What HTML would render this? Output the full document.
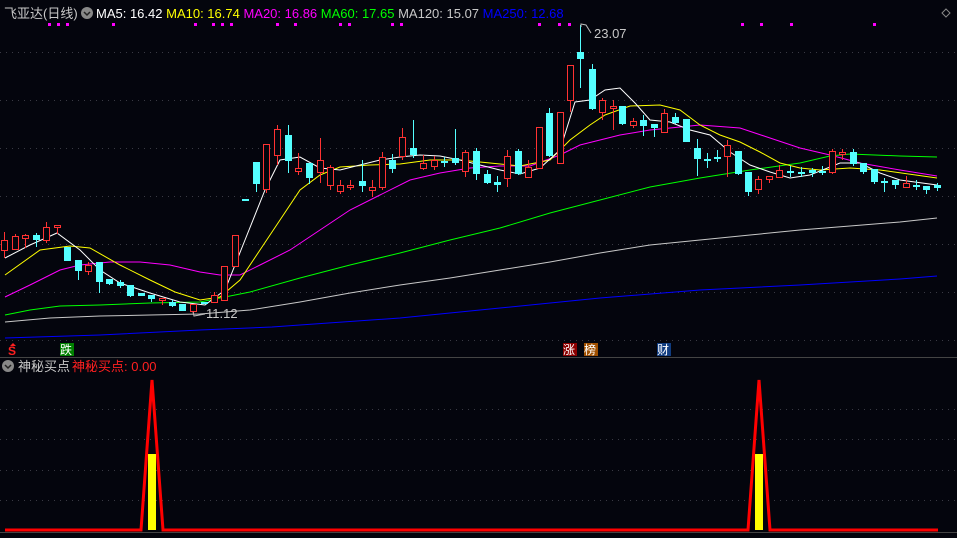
<!DOCTYPE html>
<html><head><meta charset="utf-8"><style>
html,body{margin:0;padding:0;background:#04050d;}
body{width:957px;height:538px;overflow:hidden;position:relative;font-family:"Liberation Sans","Noto Sans CJK SC",sans-serif;}
svg{position:absolute;left:0;top:0;}
</style></head><body>
<svg width="957" height="538" viewBox="0 0 957 538" xmlns="http://www.w3.org/2000/svg">
<rect width="957" height="538" fill="#04050d"/>
<g stroke="#3a3a44" stroke-width="1" stroke-dasharray="1,5">
<line x1="0" y1="52.5" x2="957" y2="52.5"/><line x1="0" y1="100.5" x2="957" y2="100.5"/>
<line x1="0" y1="148.5" x2="957" y2="148.5"/><line x1="0" y1="196.5" x2="957" y2="196.5"/>
<line x1="0" y1="244.5" x2="957" y2="244.5"/><line x1="0" y1="292.5" x2="957" y2="292.5"/>
<line x1="0" y1="340.5" x2="957" y2="340.5"/>
<line x1="0" y1="409.5" x2="957" y2="409.5"/><line x1="0" y1="439.5" x2="957" y2="439.5"/>
<line x1="0" y1="470.5" x2="957" y2="470.5"/><line x1="0" y1="500.5" x2="957" y2="500.5"/>
</g>
<line x1="0" y1="357.5" x2="957" y2="357.5" stroke="#444" />
<line x1="0" y1="532.5" x2="957" y2="532.5" stroke="#444" />
<!-- header -->
<text x="4" y="18" font-size="13" fill="#c8c8c8">飞亚达(日线)</text>
<circle cx="87" cy="13" r="6" fill="#888"/><path d="M84 12 L87 15 L90 12" stroke="#222" stroke-width="1.5" fill="none"/>
<text x="96" y="18" font-size="13"><tspan fill="#ffffff">MA5: 16.42 </tspan><tspan fill="#ffff00">MA10: 16.74 </tspan><tspan fill="#ff00ff">MA20: 16.86 </tspan><tspan fill="#00ff00">MA60: 17.65 </tspan><tspan fill="#c8c8c8">MA120: 15.07 </tspan><tspan fill="#0000ff">MA250: 12.68</tspan></text>
<path d="M946 9 L950 13 L946 17 L942 13Z" stroke="#888" fill="none"/>
<g fill="#ff00ff">
<rect x="48" y="23" width="3" height="3"/><rect x="57" y="23" width="3" height="3"/><rect x="66" y="23" width="3" height="3"/><rect x="112" y="23" width="3" height="3"/><rect x="194" y="23" width="3" height="3"/><rect x="212" y="23" width="3" height="3"/><rect x="221" y="23" width="3" height="3"/><rect x="230" y="23" width="3" height="3"/><rect x="276" y="23" width="3" height="3"/><rect x="294" y="23" width="3" height="3"/><rect x="339" y="23" width="3" height="3"/><rect x="348" y="23" width="3" height="3"/><rect x="391" y="23" width="3" height="3"/><rect x="400" y="23" width="3" height="3"/><rect x="538" y="23" width="3" height="3"/><rect x="558" y="23" width="3" height="3"/><rect x="568" y="23" width="3" height="3"/><rect x="741" y="23" width="3" height="3"/><rect x="760" y="23" width="3" height="3"/><rect x="790" y="23" width="3" height="3"/><rect x="873" y="23" width="3" height="3"/>
</g>
<!-- MAs -->
<g fill="none" stroke-width="1">
<polyline stroke="#c8c8c8" points="5,322 50,318 100,316 150,315 200,314 250,310 300,302 350,293 400,285 450,278 500,270 550,262 600,253 650,245 700,240 750,235 800,230 850,226 900,222 937,218"/>
<polyline stroke="#0000ff" points="5,338 100,335 200,330 272,327 300,325 400,318 500,308 600,298 700,290 800,285 900,279 937,276"/>
<polyline stroke="#00ff00" points="5,315 30,310 60,306 100,305 150,303 200,302 250,292 300,278 350,265 400,253 450,240 500,228 550,213 600,200 650,187 700,178 750,170 800,163 830,156 850,154 900,156 937,157"/>
<polyline stroke="#ff00ff" points="5,297 30,285 60,270 80,265 110,262 140,262 170,265 200,272 220,275 240,275 260,265 290,250 320,230 350,210 380,195 410,180 440,173 470,168 500,166 530,166 560,155 580,145 600,140 620,135 650,130 680,127 700,125 740,128 770,138 800,148 830,155 860,163 900,170 937,176"/>
<polyline stroke="#ffff00" points="5,275 40,250 70,246 90,248 120,265 150,280 175,292 200,300 220,297 240,280 260,250 280,220 300,190 320,175 340,167 370,165 400,164 430,160 460,160 490,163 520,166 550,160 570,140 590,125 605,115 630,106 660,105 680,110 700,125 720,135 740,142 760,152 780,163 800,168 820,170 850,168 880,170 937,178"/>
<polyline stroke="#ffffff" points="5,258 30,245 57,233 80,250 100,270 120,283 150,293 180,302 205,305 225,290 245,240 265,190 280,160 300,157 320,168 340,170 360,165 380,160 400,157 420,155 440,156 460,160 480,165 500,170 520,174 540,168 560,150 575,102 590,100 605,90 620,88 635,103 650,120 670,122 690,130 710,135 730,152 750,165 770,172 790,178 810,175 840,163 860,163 880,173 900,180 937,185"/>
</g>
<!-- candles: red hollow -->
<g fill="#04050d" stroke="#ff3232" stroke-width="1">
<line x1="4.5" y1="232" x2="4.5" y2="258"/><rect x="1.5" y="240.5" width="6" height="10"/>
<line x1="15.5" y1="234" x2="15.5" y2="250"/><rect x="12.5" y="236.5" width="6" height="13"/>
<line x1="25.5" y1="234" x2="25.5" y2="248"/><rect x="22.5" y="235.5" width="6" height="3"/>
<line x1="46.5" y1="222" x2="46.5" y2="243"/><rect x="43.5" y="227.5" width="6" height="13"/>
<line x1="57.5" y1="225" x2="57.5" y2="234"/><rect x="54.5" y="225.5" width="6" height="2"/>
<line x1="88.5" y1="262" x2="88.5" y2="275"/><rect x="85.5" y="265.5" width="6" height="6"/>
<line x1="162.5" y1="298" x2="162.5" y2="305"/><rect x="159.5" y="298.5" width="6" height="2"/>
<line x1="193.5" y1="304" x2="193.5" y2="315"/><rect x="190.5" y="304.5" width="6" height="7"/>
<line x1="214.5" y1="292" x2="214.5" y2="302"/><rect x="211.5" y="295.5" width="6" height="7"/>
<rect x="221.5" y="266.5" width="6" height="34"/>
<rect x="232.5" y="235.5" width="6" height="31"/>
<line x1="266.5" y1="144" x2="266.5" y2="193"/><rect x="263.5" y="144.5" width="6" height="45"/>
<line x1="277.5" y1="125" x2="277.5" y2="165"/><rect x="274.5" y="129.5" width="6" height="26"/>
<line x1="298.5" y1="153" x2="298.5" y2="175"/><rect x="295.5" y="168.5" width="6" height="3"/>
<line x1="320.5" y1="138" x2="320.5" y2="183"/><rect x="317.5" y="160.5" width="6" height="12"/>
<line x1="330.5" y1="165" x2="330.5" y2="190"/><rect x="327.5" y="167.5" width="6" height="18"/>
<line x1="340.5" y1="180" x2="340.5" y2="194"/><rect x="337.5" y="185.5" width="6" height="6"/>
<line x1="350.5" y1="180" x2="350.5" y2="190"/><rect x="347.5" y="185.5" width="6" height="2"/>
<line x1="372.5" y1="180" x2="372.5" y2="197"/><rect x="369.5" y="187.5" width="6" height="3"/>
<line x1="382.5" y1="152" x2="382.5" y2="190"/><rect x="379.5" y="157.5" width="6" height="30"/>
<line x1="402.5" y1="128" x2="402.5" y2="160"/><rect x="399.5" y="137.5" width="6" height="19"/>
<line x1="423.5" y1="155" x2="423.5" y2="170"/><rect x="420.5" y="163.5" width="6" height="5"/>
<line x1="434.5" y1="156" x2="434.5" y2="170"/><rect x="431.5" y="160.5" width="6" height="6"/>
<line x1="465.5" y1="150" x2="465.5" y2="177"/><rect x="462.5" y="152.5" width="6" height="19"/>
<line x1="507.5" y1="150" x2="507.5" y2="187"/><rect x="504.5" y="156.5" width="6" height="22"/>
<line x1="528.5" y1="160" x2="528.5" y2="177"/><rect x="525.5" y="167.5" width="6" height="10"/>
<rect x="536.5" y="127.5" width="6" height="41"/>
<rect x="557.5" y="112.5" width="6" height="51"/>
<line x1="570.5" y1="65" x2="570.5" y2="112"/><rect x="567.5" y="65.5" width="6" height="35"/>
<line x1="602.5" y1="98" x2="602.5" y2="120"/><rect x="599.5" y="100.5" width="6" height="12"/>
<line x1="613.5" y1="100" x2="613.5" y2="130"/><rect x="610.5" y="106.5" width="6" height="2"/>
<line x1="633.5" y1="118" x2="633.5" y2="128"/><rect x="630.5" y="121.5" width="6" height="4"/>
<line x1="664.5" y1="109" x2="664.5" y2="133"/><rect x="661.5" y="113.5" width="6" height="19"/>
<line x1="727.5" y1="140" x2="727.5" y2="177"/><rect x="724.5" y="145.5" width="6" height="11"/>
<line x1="758.5" y1="176" x2="758.5" y2="194"/><rect x="755.5" y="179.5" width="6" height="10"/>
<line x1="769.5" y1="176" x2="769.5" y2="183"/><rect x="766.5" y="176.5" width="6" height="3"/>
<line x1="779.5" y1="165" x2="779.5" y2="178"/><rect x="776.5" y="170.5" width="6" height="7"/>
<line x1="832.5" y1="149" x2="832.5" y2="174"/><rect x="829.5" y="151.5" width="6" height="21"/>
<line x1="842.5" y1="149" x2="842.5" y2="160"/><rect x="839.5" y="152.5" width="6" height="2"/>
<line x1="906.5" y1="176" x2="906.5" y2="188"/><rect x="903.5" y="183.5" width="6" height="4"/>
</g>
<!-- candles: cyan filled -->
<g fill="#54ffff" stroke="#54ffff" stroke-width="1">
<line x1="36.5" y1="233" x2="36.5" y2="247"/><rect x="33.5" y="235.5" width="6" height="4"/>
<rect x="64.5" y="247.5" width="6" height="13"/>
<line x1="78.5" y1="260" x2="78.5" y2="280"/><rect x="75.5" y="260.5" width="6" height="10"/>
<line x1="99.5" y1="262" x2="99.5" y2="293"/><rect x="96.5" y="262.5" width="6" height="19"/>
<line x1="109.5" y1="279" x2="109.5" y2="285"/><rect x="106.5" y="279.5" width="6" height="4"/>
<line x1="120.5" y1="280" x2="120.5" y2="288"/><rect x="117.5" y="282.5" width="6" height="3"/>
<line x1="130.5" y1="285" x2="130.5" y2="297"/><rect x="127.5" y="285.5" width="6" height="10"/>
<rect x="138.5" y="293.5" width="6" height="2"/>
<line x1="151.5" y1="295" x2="151.5" y2="302"/><rect x="148.5" y="295.5" width="6" height="3"/>
<line x1="172.5" y1="300" x2="172.5" y2="307"/><rect x="169.5" y="302.5" width="6" height="3"/>
<line x1="182.5" y1="304" x2="182.5" y2="311"/><rect x="179.5" y="304.5" width="6" height="6"/>
<rect x="201.5" y="302.5" width="6" height="1"/>
<rect x="242.5" y="199.5" width="6" height="1"/>
<line x1="256.5" y1="162" x2="256.5" y2="192"/><rect x="253.5" y="162.5" width="6" height="21"/>
<line x1="288.5" y1="125" x2="288.5" y2="173"/><rect x="285.5" y="135.5" width="6" height="25"/>
<line x1="309.5" y1="163" x2="309.5" y2="184"/><rect x="306.5" y="163.5" width="6" height="14"/>
<line x1="362.5" y1="160" x2="362.5" y2="192"/><rect x="359.5" y="181.5" width="6" height="4"/>
<line x1="392.5" y1="154" x2="392.5" y2="173"/><rect x="389.5" y="160.5" width="6" height="8"/>
<line x1="413.5" y1="120" x2="413.5" y2="158"/><rect x="410.5" y="148.5" width="6" height="6"/>
<line x1="444.5" y1="157" x2="444.5" y2="167"/><rect x="441.5" y="161.5" width="6" height="1"/>
<line x1="455.5" y1="129" x2="455.5" y2="165"/><rect x="452.5" y="158.5" width="6" height="4"/>
<line x1="476.5" y1="148" x2="476.5" y2="180"/><rect x="473.5" y="151.5" width="6" height="22"/>
<line x1="487.5" y1="170" x2="487.5" y2="184"/><rect x="484.5" y="174.5" width="6" height="8"/>
<line x1="497.5" y1="176" x2="497.5" y2="192"/><rect x="494.5" y="182.5" width="6" height="2"/>
<line x1="518.5" y1="149" x2="518.5" y2="175"/><rect x="515.5" y="151.5" width="6" height="22"/>
<line x1="549.5" y1="108" x2="549.5" y2="157"/><rect x="546.5" y="113.5" width="6" height="42"/>
<line x1="580.5" y1="25" x2="580.5" y2="88"/><rect x="577.5" y="52.5" width="6" height="6"/>
<line x1="592.5" y1="64" x2="592.5" y2="110"/><rect x="589.5" y="69.5" width="6" height="39"/>
<line x1="622.5" y1="106" x2="622.5" y2="125"/><rect x="619.5" y="106.5" width="6" height="17"/>
<line x1="643.5" y1="115" x2="643.5" y2="136"/><rect x="640.5" y="120.5" width="6" height="5"/>
<line x1="654.5" y1="124" x2="654.5" y2="137"/><rect x="651.5" y="124.5" width="6" height="3"/>
<line x1="675.5" y1="113" x2="675.5" y2="124"/><rect x="672.5" y="117.5" width="6" height="5"/>
<rect x="683.5" y="119.5" width="6" height="22"/>
<line x1="697.5" y1="139" x2="697.5" y2="176"/><rect x="694.5" y="148.5" width="6" height="10"/>
<line x1="707.5" y1="153" x2="707.5" y2="168"/><rect x="704.5" y="159.5" width="6" height="1"/>
<line x1="717.5" y1="150" x2="717.5" y2="162"/><rect x="714.5" y="157.5" width="6" height="1"/>
<line x1="738.5" y1="151" x2="738.5" y2="175"/><rect x="735.5" y="151.5" width="6" height="22"/>
<line x1="748.5" y1="172" x2="748.5" y2="196"/><rect x="745.5" y="172.5" width="6" height="19"/>
<line x1="790.5" y1="166" x2="790.5" y2="177"/><rect x="787.5" y="171.5" width="6" height="1"/>
<line x1="801.5" y1="167" x2="801.5" y2="177"/><rect x="798.5" y="172.5" width="6" height="1"/>
<line x1="812.5" y1="168" x2="812.5" y2="177"/><rect x="809.5" y="170.5" width="6" height="2"/>
<line x1="822.5" y1="166" x2="822.5" y2="175"/><rect x="819.5" y="171.5" width="6" height="1"/>
<line x1="853.5" y1="149" x2="853.5" y2="166"/><rect x="850.5" y="152.5" width="6" height="11"/>
<line x1="863.5" y1="163" x2="863.5" y2="174"/><rect x="860.5" y="163.5" width="6" height="8"/>
<line x1="874.5" y1="169" x2="874.5" y2="184"/><rect x="871.5" y="169.5" width="6" height="12"/>
<line x1="884.5" y1="178" x2="884.5" y2="192"/><rect x="881.5" y="181.5" width="6" height="1"/>
<line x1="895.5" y1="180" x2="895.5" y2="189"/><rect x="892.5" y="180.5" width="6" height="4"/>
<line x1="916.5" y1="180" x2="916.5" y2="190"/><rect x="913.5" y="185.5" width="6" height="1"/>
<line x1="926.5" y1="186" x2="926.5" y2="194"/><rect x="923.5" y="186.5" width="6" height="3"/>
<line x1="937.5" y1="183" x2="937.5" y2="191"/><rect x="934.5" y="185.5" width="6" height="2"/>
</g>
<!-- annotations -->
<path d="M581 27 L581 24 L586 25 L591 33" stroke="#bbb" fill="none"/>
<text x="594" y="38" font-size="13" fill="#c8c8c8">23.07</text>
<path d="M193 312 L194 316 L205 314" stroke="#bbb" fill="none"/>
<text x="206" y="318" font-size="13" fill="#c8c8c8">11.12</text>
<!-- markers -->
<text x="8" y="355" font-size="12" font-weight="bold" fill="#ff2020">S</text>
<path d="M10 346 L13 343 L16 346Z" fill="#ff2020"/>
<rect x="60" y="343" width="14" height="13" fill="#008000"/><text x="60" y="354" font-size="12" fill="#fff">跌</text>
<rect x="563" y="343" width="14" height="13" fill="#8b0000"/><text x="563" y="354" font-size="12" fill="#fff">涨</text>
<rect x="584" y="343" width="14" height="13" fill="#a05000"/><text x="584" y="354" font-size="12" fill="#fff">榜</text>
<rect x="657" y="343" width="14" height="13" fill="#103c80"/><text x="657" y="354" font-size="12" fill="#fff">财</text>
<!-- lower panel -->
<circle cx="8" cy="366" r="6" fill="#888"/><path d="M5 365 L8 368 L11 365" stroke="#222" stroke-width="1.5" fill="none"/>
<text x="18" y="371" font-size="13" fill="#c8c8c8">神秘买点</text>
<text x="72" y="371" font-size="13" fill="#ff2020">神秘买点: 0.00</text>
<rect x="148" y="454" width="8" height="76" fill="#ffff00"/>
<rect x="755" y="454" width="8" height="76" fill="#ffff00"/>
<polyline fill="none" stroke="#ff0000" stroke-width="3" points="5,530 141,530 152,380 163,530 748,530 759,380 770,530 938,530"/>
</svg>
</body></html>
